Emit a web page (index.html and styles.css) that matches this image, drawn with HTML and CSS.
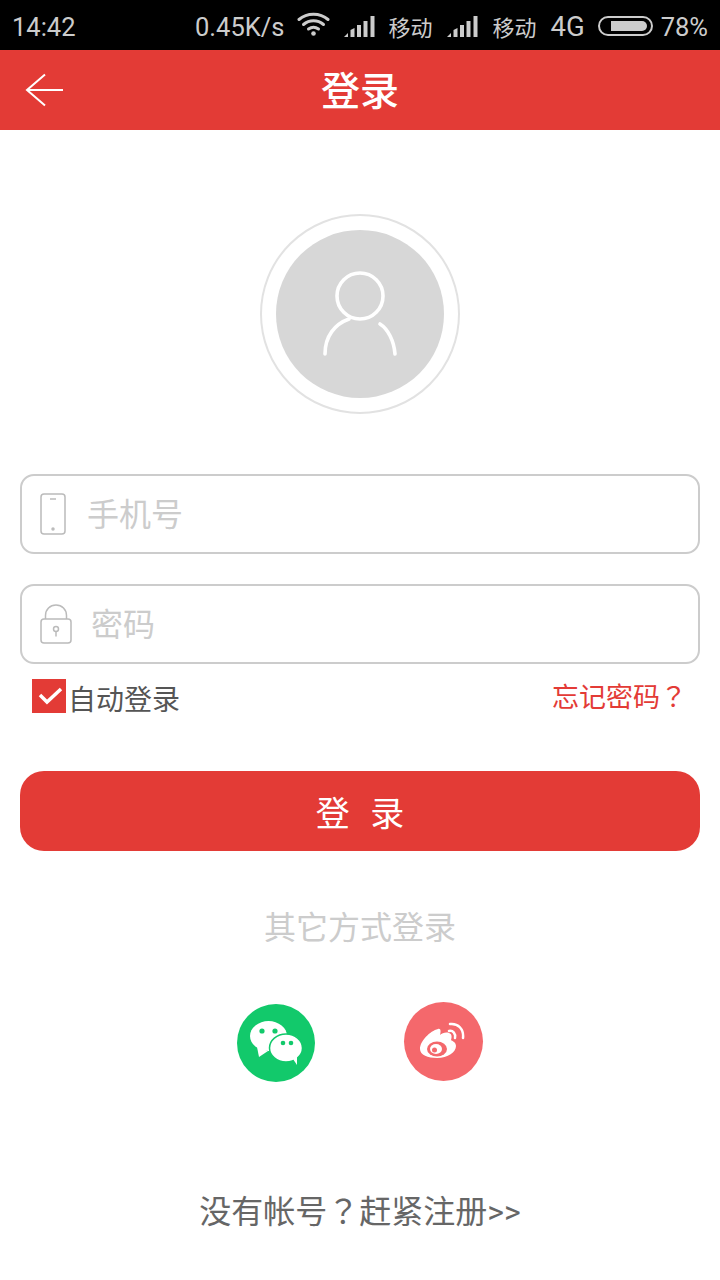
FILE: index.html
```html
<!DOCTYPE html>
<html lang="zh-CN">
<head>
	<meta charset="UTF-8">
	<title>登录</title>
	<link rel="stylesheet" href="styles.css">
</head>
<body>
	<div class="statusbar">
		<span class="time">14:42</span>
		<div class="status-right">
			<span class="speed">0.45K/s</span>
			<svg class="wifi" width="33" height="24" viewBox="0 0 33 24" fill="none" stroke="#ccc" stroke-width="3" stroke-linecap="round">
				<path d="M2 7.500C10 .5 23 .5 31 7.500"/>
				<path d="M6.500 12.500C12.300 7.500 20.700 7.500 26.500 12.500"/>
				<path d="M11.500 17C14.500 14.800 18.500 14.800 21.500 17"/>
				<circle cx="16.500" cy="21.500" r="2.300" fill="#ccc" stroke="none"/>
			</svg>
			<svg class="signal signal-a" width="31" height="21" viewBox="0 0 31 21" fill="#ccc">
				<path d="M0 21l4-4v4zM6.500 21v-7l4-2v9zM13 21V9h4v12zM19.500 21V5h4v16zM26.500 21V0h4v21z"/>
			</svg>
			<span class="carrier carrier-a">移动</span>
			<svg class="signal" width="31" height="21" viewBox="0 0 31 21" fill="#ccc">
				<path d="M0 21l4-4v4zM6.500 21v-7l4-2v9zM13 21V9h4v12zM19.500 21V5h4v16zM26.500 21V0h4v21z"/>
			</svg>
			<span class="carrier">移动</span>
			<span class="net">4G</span>
			<div class="battery"><div class="battery-fill"></div></div>
			<span class="percent">78%</span>
		</div>
	</div>
	<div class="header">
		<svg class="back" width="40" height="34" viewBox="0 0 40 34" fill="none" stroke="#fff" stroke-width="2">
			<path d="M38 17H2M20 1.500L2 17l18 15.500"/>
		</svg>
		<span class="title">登录</span>
	</div>
	<div class="avatar">
		<div class="avatar-inner">
			<svg width="76" height="88" viewBox="0 0 76 88" fill="none" stroke="#fff" stroke-width="3.600" stroke-linecap="round">
				<circle cx="38" cy="26" r="23"/>
				<path d="M3 84C3 66 13 54 27 49"/>
				<path d="M58 54C66 59 72 71 73 84"/>
			</svg>
		</div>
	</div>
	<div class="form">
		<div class="field">
			<svg class="field-icon" width="28" height="44" viewBox="0 0 28 44" fill="none" stroke="#bbb" stroke-width="1.500">
				<rect x="2" y="2" width="24" height="40" rx="3"/>
				<path d="M11 7h6"/>
				<circle cx="14" cy="37" r="1" fill="#bbb"/>
			</svg>
			<span class="placeholder">手机号</span>
		</div>
		<div class="field field-pwd">
			<svg class="field-icon" width="32" height="40" viewBox="0 0 32 40" fill="none" stroke="#bbb" stroke-width="1.500">
				<path d="M5.500 15V11.500C5.500 5.500 10 1 16 1S26.500 5.500 26.500 11.500V15"/>
				<rect x="1" y="15" width="30" height="24" rx="3"/>
				<circle cx="16" cy="25" r="2.500"/>
				<path d="M16 27.500v5"/>
			</svg>
			<span class="placeholder">密码</span>
		</div>
		<div class="options">
			<label class="auto">
				<span class="check">
					<svg width="34" height="34" viewBox="0 0 34 34" fill="none" stroke="#fff" stroke-width="3.500">
						<path d="M8 16l7 7L29 10"/>
					</svg>
				</span>
				<span class="auto-text">自动登录</span>
			</label>
			<span class="forget">忘记密码<span class="full-mark" lang="zh-TW">？</span></span>
		</div>
		<div class="btn">登 录</div>
	</div>
	<div class="other">其它方式登录</div>
	<div class="social">
		<div class="social-icon wechat">
			<svg width="52" height="44" viewBox="0 0 52 44">
				<ellipse cx="18.500" cy="15" rx="18.500" ry="15" fill="#fff"/>
				<path d="M7 26l2 10 9-6z" fill="#fff"/>
				<ellipse cx="36" cy="27" rx="16.500" ry="14" fill="#fff" stroke="#12c96b" stroke-width="1.500"/>
				<path d="M43 38l4 6 0-9z" fill="#fff"/>
				<circle cx="12" cy="10" r="2.600" fill="#12c96b"/>
				<circle cx="25" cy="10" r="2.600" fill="#12c96b"/>
				<circle cx="33" cy="22" r="2.300" fill="#12c96b"/>
				<circle cx="41" cy="22" r="2.300" fill="#12c96b"/>
			</svg>
		</div>
		<div class="social-icon weibo">
			<svg width="48" height="40" viewBox="0 0 48 40">
				<path d="M18 7C10 9 0 19 0 27C0 33 8 36 17 36C28 36 36 30 36 24C36 20 32 19 31 18C32 15 32 12 29 11C26 10 22 11 20 13C21 10 21 6 18 7z" fill="#fff"/>
				<ellipse cx="17" cy="27" rx="10" ry="7.500" fill="#f4686c"/>
				<ellipse cx="16" cy="27" rx="6" ry="5" fill="#fff"/>
				<circle cx="14.500" cy="28" r="2.500" fill="#f4686c"/>
				<path d="M29 9c4-1 7 3 6 7" fill="none" stroke="#fff" stroke-width="2.500" stroke-linecap="round"/>
				<path d="M30 2c8-1 14 5 13 14" fill="none" stroke="#fff" stroke-width="2.500" stroke-linecap="round"/>
			</svg>
		</div>
	</div>
	<div class="register">没有帐号<span class="full-mark" lang="zh-TW">？</span>赶紧注册&gt;&gt;</div>
</body>
</html>
```
FILE: styles.css
```css
*{
	box-sizing: border-box;
}
body{
	margin: 0;
	width: 720px;
	height: 1280px;
	overflow: hidden;
	background: #fff;
	font-family: "Roboto", "Noto Sans CJK SC", sans-serif;
}
.statusbar{
	height: 50px;
	background: #000;
	color: #ccc;
	font-size: 25.5px;
	padding: 3px 12px 0;
	display: flex;
	justify-content: space-between;
	align-items: center;
}
.status-right{
	display: flex;
	align-items: center;
}
.speed{
	margin-right: 13px;
}
.wifi{
	margin: -5px 14px 0 0;
}
.signal{
	margin: -1px 14px 0 0;
}
.signal-a{
	margin-right: 13px;
}
.carrier{
	font-size: 22px;
	margin: -2px 14px 0 0;
}
.carrier-a{
	margin-right: 15px;
}
.net{
	font-size: 27.5px;
	margin-right: 13px;
}
.battery{
	width: 55px;
	height: 20px;
	border: 2px solid #ccc;
	border-radius: 10px;
	padding: 3px;
	margin: -2px 8px 0 0;
}
.battery-fill{
	width: 36px;
	height: 10px;
	margin-left: 8px;
	background: #ccc;
	border-radius: 0 5px 5px 0;
}
.header{
	height: 80px;
	background: #e33b36;
	display: flex;
	align-items: center;
	justify-content: center;
	position: relative;
}
.back{
	position: absolute;
	left: 25px;
	top: 23px;
}
.title{
	color: #fff;
	font-size: 39px;
	font-weight: 500;
	padding-bottom: 4px;
}
.avatar{
	width: 200px;
	height: 200px;
	margin: 84px auto 60px;
	border: 2px solid #e2e2e2;
	border-radius: 50%;
	display: flex;
	align-items: center;
	justify-content: center;
}
.avatar-inner{
	width: 168px;
	height: 168px;
	border-radius: 50%;
	background: #d7d7d7;
	display: flex;
	align-items: center;
	justify-content: center;
}
.form{
	padding: 0 20px;
}
.field{
	height: 80px;
	border: 2px solid #ccc;
	border-radius: 14px;
	margin-bottom: 30px;
	padding-left: 17px;
	display: flex;
	align-items: center;
	gap: 20px;
}
.field-pwd{
	margin-bottom: 15px;
	padding-left: 18px;
	gap: 19px;
}
.placeholder{
	font-size: 32px;
	color: #ccc;
	padding-bottom: 4px;
}
.options{
	display: flex;
	justify-content: space-between;
	align-items: center;
	padding: 0 13px 0 12px;
	height: 34px;
	font-size: 28px;
}
.auto{
	display: flex;
	align-items: center;
	gap: 2px;
	color: #555;
}
.auto-text{
	padding-top: 4px;
}
.check{
	width: 34px;
	height: 34px;
	background: #e33b36;
	display: block;
}
.check svg{
	display: block;
}
.forget{
	color: #e33b36;
	font-size: 27px;
	padding-bottom: 2px;
}
.full-mark{
	font-family: "Noto Sans CJK TC", "Noto Sans CJK JP", sans-serif;
}
.btn{
	height: 80px;
	margin-top: 58px;
	border-radius: 24px;
	background: #e33b36;
	color: #fff;
	font-size: 34px;
	word-spacing: 12px;
	display: flex;
	align-items: center;
	justify-content: center;
}
.other{
	margin-top: 51px;
	text-align: center;
	font-size: 32px;
	color: #ccc;
}
.social{
	display: flex;
	justify-content: center;
	gap: 89px;
	margin-top: 54px;
}
.social-icon{
	height: 79px;
	width: 79px;
	border-radius: 50%;
	display: flex;
	align-items: center;
	justify-content: center;
}
.wechat{
	background: #12c96b;
	width: 78px;
	height: 78px;
	margin-top: 2px;
}
.weibo{
	background: #f4686c;
}
.register{
	margin-top: 104px;
	text-align: center;
	font-size: 32px;
	color: #666;
}
```
